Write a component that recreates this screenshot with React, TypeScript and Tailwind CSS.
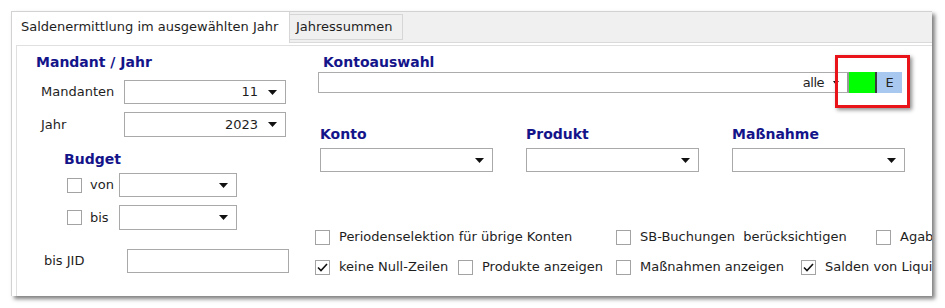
import React from "react";

function Arrow({ small = false }: { small?: boolean }) {
  return small ? (
    <svg width="6" height="4" viewBox="0 0 6 4" className="shrink-0">
      <path d="M0 0h6L3 4z" fill="#111" />
    </svg>
  ) : (
    <svg width="9" height="5" viewBox="0 0 9 5" className="shrink-0">
      <path d="M0 0h9L4.5 5z" fill="#111" />
    </svg>
  );
}

function Dropdown({ value, className }: { value?: string; className: string }) {
  return (
    <div
      className={`flex items-center justify-end gap-[10px] border border-[#a9a9a9] bg-white pr-[8px] ${className}`}
    >
      {value && <span>{value}</span>}
      <Arrow />
    </div>
  );
}

function Check({ checked = false }: { checked?: boolean }) {
  return (
    <span className="flex h-[15px] w-[15px] shrink-0 items-center justify-center border border-[#a3a3a3] bg-white">
      {checked && (
        <svg width="11" height="9" viewBox="0 0 11 9">
          <path d="M1 4.5l3 3L10 1" fill="none" stroke="#111" strokeWidth="1.6" />
        </svg>
      )}
    </span>
  );
}

function CheckItem({ label, checked, className }: { label: string; checked?: boolean; className: string }) {
  return (
    <div className={`flex shrink-0 items-center gap-[9px] whitespace-pre ${className}`}>
      <Check checked={checked} />
      <span>{label}</span>
    </div>
  );
}

const head = "text-[14px] font-bold leading-[17px] text-[#14148a]";

export default function App() {
  return (
    <div className="relative h-[308px] w-[945px] overflow-hidden bg-white font-['DejaVu_Sans',sans-serif] text-[13px] text-[#1e1e1e]">
      {/* Fensterrahmen */}
      <div className="ml-[11px] mt-[11px] h-[285px] w-[921px] overflow-hidden border-l border-t border-[#d2d2d2] bg-white shadow-[3px_3px_4px_rgba(0,0,0,0.5)]">
        {/* Reiter */}
        <div className="flex h-[31px] items-end border-b border-[#dadada] bg-[#f0f0f0]">
          <div className="-mb-px flex h-[32px] w-[278px] items-center border-r border-[#d6d6d6] bg-white pl-[9px]">
            Saldenermittlung im ausgewählten Jahr
          </div>
          <div className="mb-[2px] flex h-[26px] w-[113px] items-center border border-l-0 border-[#d6d6d6] pl-[6px]">
            Jahressummen
          </div>
        </div>

        {/* Inhalt */}
        <div className="ml-[4px] mt-[2px] flex h-[260px] border-l border-t border-[#e0e0e0]">
          {/* linke Spalte */}
          <div className="flex w-[298px] shrink-0 flex-col">
            <div className={`${head} ml-[19px] mt-[8px]`}>Mandant / Jahr</div>
            <div className="ml-[24px] mt-[9px] flex h-[24px] items-center">
              <span className="w-[83px]">Mandanten</span>
              <Dropdown value="11" className="h-[24px] w-[162px]" />
            </div>
            <div className="ml-[24px] mt-[8px] flex h-[25px] items-center">
              <span className="w-[83px]">Jahr</span>
              <Dropdown value="2023" className="h-[25px] w-[162px]" />
            </div>

            <div className={`${head} ml-[47px] mt-[14px]`}>Budget</div>
            <div className="ml-[50px] mt-[5px] flex h-[24px] items-center">
              <Check />
              <span className="ml-[8px] w-[29px]">von</span>
              <Dropdown className="h-[24px] w-[118px]" />
            </div>
            <div className="ml-[50px] mt-[8px] flex h-[25px] items-center">
              <Check />
              <span className="ml-[8px] w-[29px]">bis</span>
              <Dropdown className="h-[25px] w-[118px]" />
            </div>

            <div className="ml-[27px] mt-[19px] flex h-[24px] items-center">
              <span className="w-[83px]">bis JID</span>
              <div className="h-[24px] w-[162px] border border-[#a9a9a9] bg-white" />
            </div>
          </div>

          {/* rechte Seite */}
          <div className="flex flex-col">
            <div className={`${head} ml-[8px] mt-[8px]`}>Kontoauswahl</div>
            <div className="ml-[3px] mt-[1px] flex h-[21px]">
              <div className="flex h-full w-[531px] items-center justify-end gap-[9px] border border-r-2 border-[#acacac] border-r-[#9a9a9a] bg-white pr-[8px]">
                <span className="tracking-[-0.5px]">alle</span>
                <Arrow small />
              </div>
              <div className="h-full w-[26px] bg-[#00ff00]" />
              <div className="h-full w-[2px] bg-[#3c3c3c]" />
              <div className="flex h-full w-[25px] items-center justify-center bg-[#a9c8ef] text-[#222]">E</div>
            </div>

            <div className="ml-[5px] mt-[33px] flex gap-[33px]">
              {["Konto", "Produkt", "Maßnahme"].map((t) => (
                <div key={t} className="flex w-[173px] flex-col">
                  <div className={head}>{t}</div>
                  <Dropdown className="mt-[5px] h-[24px] w-[173px]" />
                </div>
              ))}
            </div>

            <div className="mt-[56px] flex h-[18px] items-center">
              <CheckItem className="w-[301px]" label="Periodenselektion für übrige Konten" />
              <CheckItem className="w-[260px]" label="SB-Buchungen  berücksichtigen" />
              <CheckItem className="w-[120px]" label="Agabenkonten anzeigen" />
            </div>
            <div className="mt-[12px] flex h-[18px] items-center">
              <CheckItem className="w-[143px]" checked label="keine Null-Zeilen" />
              <CheckItem className="w-[158px]" label="Produkte anzeigen" />
              <CheckItem className="w-[185px]" label="Maßnahmen anzeigen" />
              <CheckItem className="w-[200px]" checked label="Salden von Liquiditätskonten" />
            </div>
          </div>
        </div>
      </div>

      {/* rote Markierung */}
      <div className="absolute left-[835px] top-[55px] h-[53px] w-[75px] border-[3px] border-[#e8141a] shadow-[2px_2px_4px_rgba(0,0,0,0.45)]" />
    </div>
  );
}
